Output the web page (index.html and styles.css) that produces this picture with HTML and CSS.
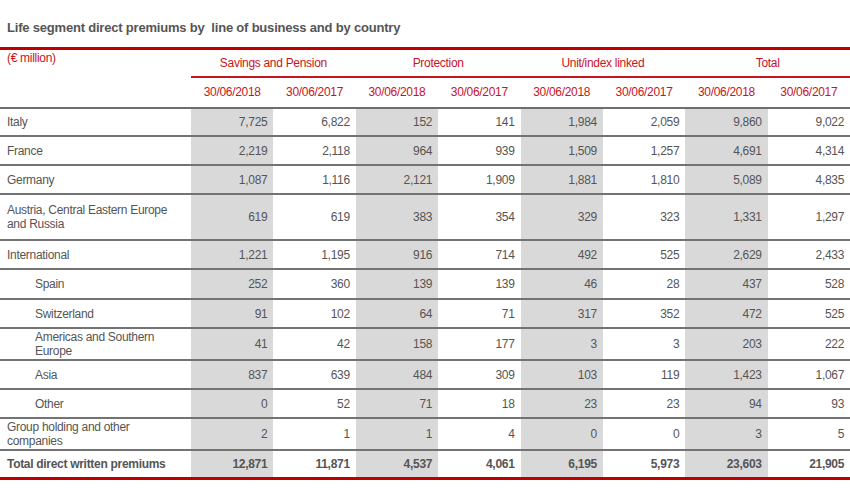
FILE: index.html
```html
<!DOCTYPE html>
<html>
<head>
<meta charset="utf-8">
<link rel="stylesheet" href="styles.css">
</head>
<body>
<div class="title">Life segment direct premiums by&nbsp; line of business and by country</div>
<table class="tbl">
  <colgroup>
    <col class="c-label">
    <col class="c-num"><col class="c-num"><col class="c-num"><col class="c-num">
    <col class="c-num"><col class="c-num"><col class="c-num"><col class="c-num">
  </colgroup>
  <thead>
    <tr class="h-group">
      <th class="unit" rowspan="2">(€ million)</th>
      <th class="grp" colspan="2">Savings and Pension</th>
      <th class="grp" colspan="2">Protection</th>
      <th class="grp" colspan="2">Unit/index linked</th>
      <th class="grp" colspan="2">Total</th>
    </tr>
    <tr class="h-date">
      <th>30/06/2018</th><th>30/06/2017</th>
      <th>30/06/2018</th><th>30/06/2017</th>
      <th>30/06/2018</th><th>30/06/2017</th>
      <th>30/06/2018</th><th>30/06/2017</th>
    </tr>
  </thead>
  <tbody>
    <tr class="r28"><td class="lbl">Italy</td><td class="g">7,725</td><td>6,822</td><td class="g">152</td><td>141</td><td class="g">1,984</td><td>2,059</td><td class="g">9,860</td><td>9,022</td></tr>
    <tr class="r29"><td class="lbl">France</td><td class="g">2,219</td><td>2,118</td><td class="g">964</td><td>939</td><td class="g">1,509</td><td>1,257</td><td class="g">4,691</td><td>4,314</td></tr>
    <tr class="r29"><td class="lbl">Germany</td><td class="g">1,087</td><td>1,116</td><td class="g">2,121</td><td>1,909</td><td class="g">1,881</td><td>1,810</td><td class="g">5,089</td><td>4,835</td></tr>
    <tr class="r46"><td class="lbl">Austria, Central Eastern Europe and Russia</td><td class="g">619</td><td>619</td><td class="g">383</td><td>354</td><td class="g">329</td><td>323</td><td class="g">1,331</td><td>1,297</td></tr>
    <tr class="r29"><td class="lbl">International</td><td class="g">1,221</td><td>1,195</td><td class="g">916</td><td>714</td><td class="g">492</td><td>525</td><td class="g">2,629</td><td>2,433</td></tr>
    <tr class="r30"><td class="lbl sub">Spain</td><td class="g">252</td><td>360</td><td class="g">139</td><td>139</td><td class="g">46</td><td>28</td><td class="g">437</td><td>528</td></tr>
    <tr class="r29"><td class="lbl sub">Switzerland</td><td class="g">91</td><td>102</td><td class="g">64</td><td>71</td><td class="g">317</td><td>352</td><td class="g">472</td><td>525</td></tr>
    <tr class="r32"><td class="lbl sub">Americas and Southern Europe</td><td class="g">41</td><td>42</td><td class="g">158</td><td>177</td><td class="g">3</td><td>3</td><td class="g">203</td><td>222</td></tr>
    <tr class="r29"><td class="lbl sub">Asia</td><td class="g">837</td><td>639</td><td class="g">484</td><td>309</td><td class="g">103</td><td>119</td><td class="g">1,423</td><td>1,067</td></tr>
    <tr class="r29"><td class="lbl sub">Other</td><td class="g">0</td><td>52</td><td class="g">71</td><td>18</td><td class="g">23</td><td>23</td><td class="g">94</td><td>93</td></tr>
    <tr class="r32"><td class="lbl">Group holding and other companies</td><td class="g">2</td><td>1</td><td class="g">1</td><td>4</td><td class="g">0</td><td>0</td><td class="g">3</td><td>5</td></tr>
    <tr class="r29 total"><td class="lbl">Total direct written premiums</td><td class="g">12,871</td><td>11,871</td><td class="g">4,537</td><td>4,061</td><td class="g">6,195</td><td>5,973</td><td class="g">23,603</td><td>21,905</td></tr>
  </tbody>
</table>
</body>
</html>
```

FILE: styles.css
```css
html, body {
  margin: 0;
  padding: 0;
  background: #ffffff;
}

body {
  width: 850px;
  font-family: "Liberation Sans", Arial, sans-serif;
  color: #555555;
}

.title {
  height: 47px;
  box-sizing: border-box;
  padding: 20px 0 0 7px;
  font-size: 13px;
  font-weight: bold;
  line-height: 16px;
  letter-spacing: -0.2px;
  color: #555555;
}

.tbl {
  width: 850px;
  table-layout: fixed;
  border-collapse: separate;
  border-spacing: 0;
  border-top: 3px solid #c00000;
  font-size: 12px;
  letter-spacing: -0.3px;
}

.c-label { width: 191px; }
.c-num { width: 82.375px; }

th {
  font-weight: normal;
  color: #c8141e;
  padding: 0;
  text-align: center;
  vertical-align: middle;
}

th.unit {
  text-align: left;
  vertical-align: top;
  padding: 1px 0 0 7px;
  line-height: 14px;
  border-bottom: 2px solid #6e6e6e;
}

.h-group th.grp {
  height: 28px;
  box-sizing: border-box;
  border-bottom: 2px solid #c8141e;
  line-height: 14px;
}

.h-date th {
  height: 31px;
  box-sizing: border-box;
  border-bottom: 2px solid #6e6e6e;
  line-height: 14px;
  padding-bottom: 1px;
}

td {
  padding: 0 6px 0 0;
  text-align: right;
  vertical-align: middle;
  border-bottom: 2px solid #737373;
  box-sizing: border-box;
  line-height: 14px;
}

td.g {
  background: #d9d9da;
}

td.lbl {
  text-align: left;
  padding: 0 8px 0 7px;
}

td.lbl.sub {
  padding-left: 35px;
}

tr.r28 td { height: 28px; }
tr.r29 td { height: 29px; }
tr.r30 td { height: 30px; }
tr.r32 td { height: 32px; }
tr.r46 td { height: 46px; }

tr.total td {
  font-weight: bold;
  border-bottom: 3px solid #c00000;
}
```
